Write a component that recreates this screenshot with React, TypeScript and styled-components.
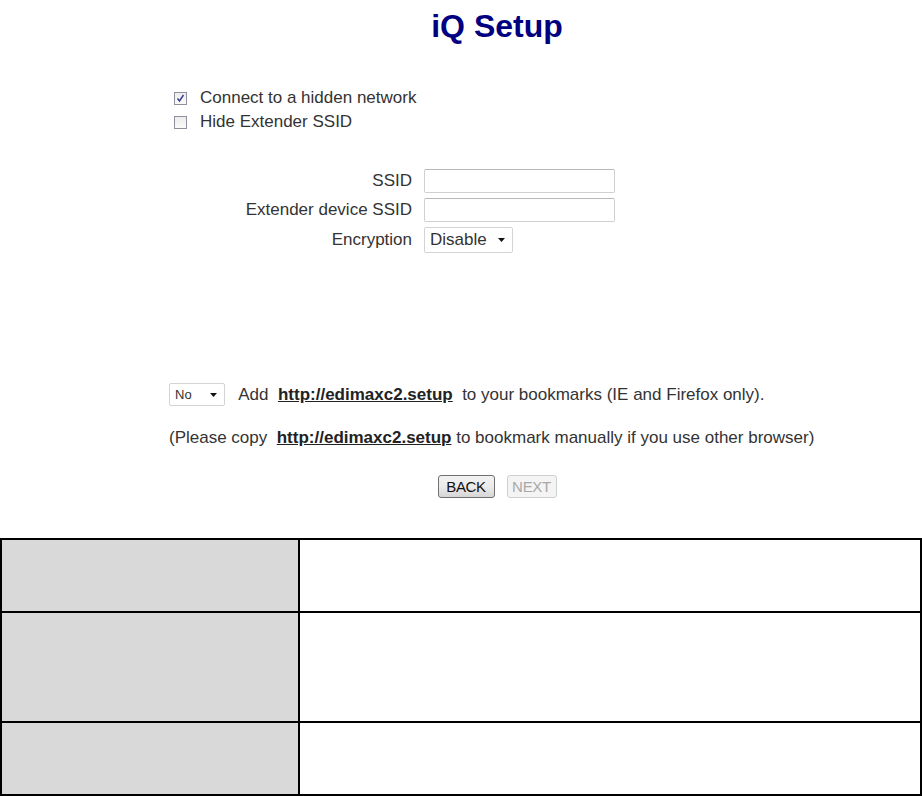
import React from "react";
import styled, { createGlobalStyle } from "styled-components";

const GlobalStyle = createGlobalStyle`
  html, body {
    margin: 0;
    padding: 0;
    background: #fff;
  }
  body {
    font-family: "Liberation Sans", Arial, sans-serif;
    color: #333;
  }
`;

const Page = styled.div`
  width: 922px;
  display: flex;
  flex-direction: column;
`;

const Title = styled.h1`
  margin: 8px 0 0;
  padding-left: 72px;
  text-align: center;
  font-size: 32px;
  line-height: 36px;
  font-weight: bold;
  color: #000080;
`;

const Options = styled.div`
  margin-top: 42px;
  padding-left: 174px;
  display: flex;
  flex-direction: column;
`;

const OptionRow = styled.label`
  display: flex;
  align-items: center;
  gap: 13px;
  height: 24px;
  font-size: 17px;
`;

const Box = styled.span`
  width: 11px;
  height: 11px;
  border: 1px solid #8f8f9d;
  background: linear-gradient(#ececec, #fafafa);
  display: flex;
  align-items: center;
  justify-content: center;
`;

const Form = styled.div`
  margin-top: 35px;
  display: grid;
  grid-template-columns: 412px 200px;
  column-gap: 12px;
  row-gap: 5px;
  align-items: center;
`;

const Label = styled.span`
  text-align: right;
  font-size: 17px;
`;

const TextInput = styled.input`
  box-sizing: border-box;
  width: 191px;
  height: 24px;
  border: 1px solid #d0d0d0;
  border-top-color: #b8b8b8;
  border-radius: 2px;
  padding: 0 4px;
  margin: 0;
`;

const SelectWrap = styled.div<{ $w: number; $h: number; $size: number }>`
  position: relative;
  box-sizing: border-box;
  width: ${(p) => p.$w}px;
  height: ${(p) => p.$h}px;
  border: 1px solid #d4d4d4;
  border-radius: 2px;
  background: #fff;
  display: flex;
  align-items: center;
  padding-left: 5px;
  font-size: ${(p) => p.$size}px;
  color: #333;
  flex-shrink: 0;
`;

const Caret = styled.svg`
  position: absolute;
  right: 7px;
  top: 50%;
  margin-top: -2px;
`;

const Bookmark = styled.div`
  margin-top: 130px;
  padding-left: 169px;
  display: flex;
  flex-direction: column;
  gap: 20px;
`;

const BookLine = styled.div`
  display: flex;
  align-items: center;
  height: 23px;
  font-size: 17px;
  white-space: pre;
`;

const Link = styled.a`
  font-weight: bold;
  color: #222;
  text-decoration: underline;
`;

const Buttons = styled.div`
  margin-top: 26px;
  padding-left: 72px;
  display: flex;
  justify-content: center;
  gap: 12px;
`;

const Button = styled.button<{ $disabled?: boolean; $w: number }>`
  box-sizing: border-box;
  width: ${(p) => p.$w}px;
  height: 23px;
  padding: 0;
  font-family: "Liberation Sans", Arial, sans-serif;
  font-size: 15px;
  letter-spacing: -0.3px;
  border-radius: 3px;
  color: ${(p) => (p.$disabled ? "#a8a8a8" : "#111")};
  border: 1px solid ${(p) => (p.$disabled ? "#cfcfcf" : "#707070")};
  background: ${(p) =>
    p.$disabled ? "#f4f4f4" : "linear-gradient(#f2f2f2, #ebebeb 50%, #d6d6d6)"};
`;

const Table = styled.table`
  margin-top: 40px;
  width: 922px;
  border-collapse: collapse;
  border: 2px solid #000;
`;

const HeadCell = styled.td<{ $h: number }>`
  width: 296px;
  height: ${(p) => p.$h}px;
  background: #d9d9d9;
  border: 2px solid #000;
  padding: 0;
`;

const BodyCell = styled.td`
  border: 2px solid #000;
  padding: 0;
`;

const CaretIcon = () => (
  <Caret width="7" height="4" viewBox="0 0 7 4">
    <path d="M0 0h7L3.5 4z" fill="#111" />
  </Caret>
);

export default function App() {
  return (
    <>
      <GlobalStyle />
      <Page>
        <Title>iQ Setup</Title>
        <Options>
          <OptionRow>
            <Box>
              <svg width="9" height="9" viewBox="0 0 9 9">
                <path d="M1.5 4.5l2 2.5 4-6" fill="none" stroke="#3b3f8f" strokeWidth="1.5" />
              </svg>
            </Box>
            Connect to a hidden network
          </OptionRow>
          <OptionRow>
            <Box />
            Hide Extender SSID
          </OptionRow>
        </Options>

        <Form>
          <Label>SSID</Label>
          <TextInput />
          <Label>Extender device SSID</Label>
          <TextInput />
          <Label>Encryption</Label>
          <SelectWrap $w={89} $h={26} $size={17}>
            Disable
            <CaretIcon />
          </SelectWrap>
        </Form>

        <Bookmark>
          <BookLine>
            <SelectWrap $w={56} $h={23} $size={13}>
              No
              <CaretIcon />
            </SelectWrap>
            {"   Add  "}
            <Link>http://edimaxc2.setup</Link>
            {"  to your bookmarks (IE and Firefox only)."}
          </BookLine>
          <BookLine>
            {"(Please copy  "}
            <Link>http://edimaxc2.setup</Link>
            {" to bookmark manually if you use other browser)"}
          </BookLine>
        </Bookmark>

        <Buttons>
          <Button $w={57}>BACK</Button>
          <Button $w={50} $disabled>
            NEXT
          </Button>
        </Buttons>

        <Table>
          <tbody>
            <tr>
              <HeadCell $h={71} />
              <BodyCell />
            </tr>
            <tr>
              <HeadCell $h={108} />
              <BodyCell />
            </tr>
            <tr>
              <HeadCell $h={71} />
              <BodyCell />
            </tr>
          </tbody>
        </Table>
      </Page>
    </>
  );
}
